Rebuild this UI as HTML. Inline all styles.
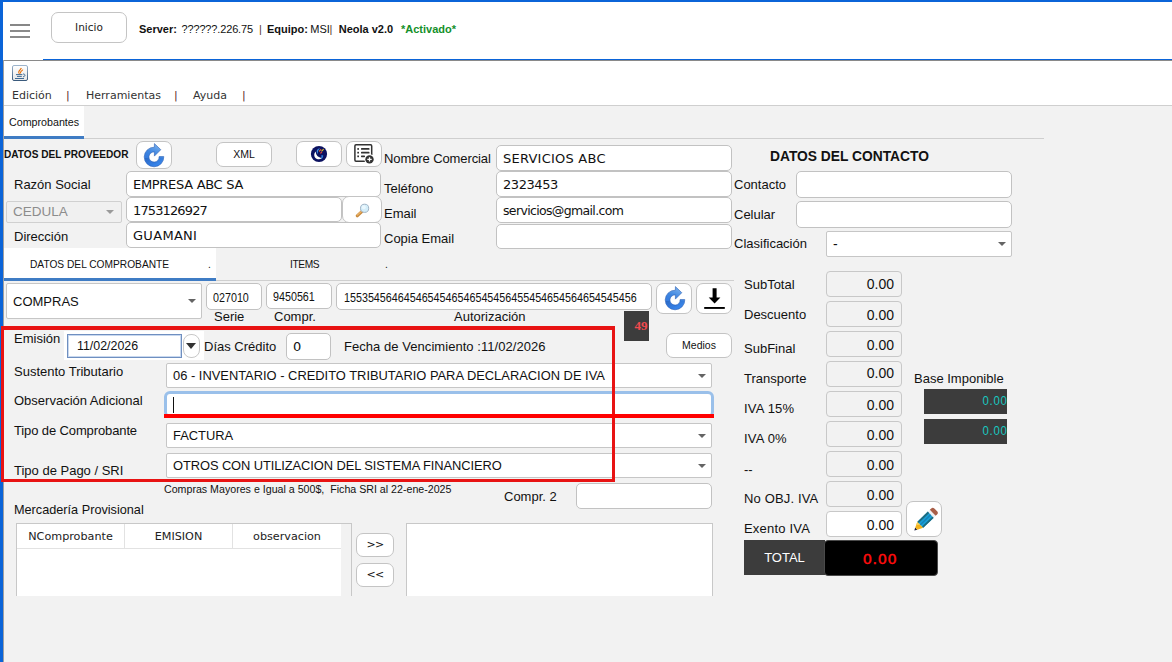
<!DOCTYPE html>
<html lang="es">
<head>
<meta charset="utf-8">
<title>Neola v2.0 - Comprobantes</title>
<style>
html,body{margin:0;padding:0;}
body{width:1172px;height:662px;overflow:hidden;background:#f2f2f2;position:relative;font-family:"Liberation Sans",Arial,sans-serif;font-size:14px;color:#111;}
.a{position:absolute;box-sizing:border-box;white-space:nowrap;}
.lbl{margin-top:1px;position:absolute;white-space:nowrap;font-size:13px;line-height:16px;color:#111;}
.inp{position:absolute;box-sizing:border-box;background:#fff;border:1px solid #c2c2c2;border-radius:5px;white-space:nowrap;overflow:hidden;}
.btn{position:absolute;box-sizing:border-box;background:#fff;border:1px solid #c4c4c4;border-radius:7px;white-space:nowrap;text-align:center;}
.sel{position:absolute;box-sizing:border-box;background:#fff;border:1px solid #c6c6c6;border-radius:2px;white-space:nowrap;overflow:hidden;}
.sel:after{content:"";position:absolute;right:5px;top:50%;margin-top:-2px;border-left:4.2px solid transparent;border-right:4.2px solid transparent;border-top:4.6px solid #646464;}
.sel.dis:after{border-top-color:#9a9a9a;right:7px;}
.cs{font-family:"DejaVu Sans","Liberation Sans",sans-serif;}
.num{position:absolute;box-sizing:border-box;left:826px;width:76px;height:26px;overflow:hidden;border:1px solid #c8c8c8;border-radius:4px;background:#f2f2f2;text-align:right;padding-right:7px;font-size:14px;line-height:25px;}
.mn{font-size:11px;line-height:14px;color:#333;margin-top:1px;}
.it{font-size:13px;line-height:24px;padding-top:1px;padding-left:5px;color:#111;}
.st{font-size:10.2px;line-height:14px;color:#111;}
.sm{font-size:12px;line-height:25px;padding-left:7px;padding-top:1px;color:#111;}
.sm span{display:inline-block;transform:scaleX(.895);transform-origin:0 50%;}
.s13{font-size:12.9px;line-height:23px;padding-left:6px;color:#111;}
.th{font-size:11.2px;line-height:14px;text-align:center;color:#222;}
.bi{width:83px;height:25px;background:#3c3c3c;color:#18c8c0;font-size:13.4px;line-height:24px;text-align:right;padding-right:0;}
.bi span{display:inline-block;letter-spacing:.9px;margin-right:-.9px;transform:scaleX(.85);transform-origin:100% 50%;}
.hd{top:22px;font-size:11px;line-height:14px;color:#111;}
</style>
</head>
<body>
<svg width="0" height="0" style="position:absolute">
<defs>
<linearGradient id="rg" x1="0.7" y1="0" x2="0.3" y2="1">
<stop offset="0" stop-color="#7db4f0"/><stop offset="0.45" stop-color="#3f86e0"/><stop offset="1" stop-color="#2a72e0"/>
</linearGradient>
<linearGradient id="rg2" x1="0" y1="0" x2="1" y2="1">
<stop offset="0" stop-color="#2a62b8"/><stop offset="1" stop-color="#3f95ff"/>
</linearGradient>
<symbol id="refresh" viewBox="-14 -14 28 28" overflow="visible">
<path d="M9.8 -0.4 A9.8 9.8 0 1 1 0.4 -9.8 L0.4 -13.4 L6.8 -7.3 L0.4 -0.9 L0.4 -5.1 A5.1 5.1 0 1 0 5.1 -0.4 Z" fill="url(#rg)" stroke="#2b5fb4" stroke-width="0.6" stroke-linejoin="round"/>
<path d="M-9.3 1 A9.4 9.4 0 0 0 9.3 1 L5.4 1 A5.4 5.4 0 0 1 -5.4 1 Z" fill="url(#rg2)" opacity="0.75"/>
</symbol>
</defs>
</svg>
<!-- window chrome -->
<div class="a" style="left:0;top:0;width:1172px;height:60px;background:#fff;"></div>
<div class="a" style="left:0;top:60px;width:1172px;height:45px;background:#fff;"></div>
<div class="a" style="left:0;top:0;width:1172px;height:2px;background:#0b64d8;"></div>
<div class="a" style="left:3px;top:60px;width:1169px;height:1px;background:#8a8a8a;"></div><div class="a" style="left:43px;top:59px;width:1129px;height:1px;background:#0b64d8;"></div>
<div class="a" style="left:0;top:105px;width:1172px;height:1px;background:#cfcfcf;"></div>

<!-- hamburger -->
<div class="a" style="left:10px;top:24px;width:20px;height:2px;background:#878787;"></div>
<div class="a" style="left:10px;top:30px;width:20px;height:2px;background:#8a8a8a;"></div>
<div class="a" style="left:10px;top:36px;width:20px;height:2px;background:#8a8a8a;"></div>

<div class="btn cs" style="left:51px;top:12px;width:76px;height:31px;font-size:10.5px;line-height:29px;color:#222;">Inicio</div>
<div class="a hd" style="left:139px;"><b>Server:</b></div>
<div class="a hd" style="left:181.5px;letter-spacing:-.15px;">??????.226.75</div>
<div class="a hd" style="left:259px;color:#5a3a2a;">|</div>
<div class="a hd" style="left:267px;"><b>Equipo:</b></div>
<div class="a hd" style="left:310.3px;">MSI</div>
<div class="a hd" style="left:329.5px;color:#5a3a2a;">|</div>
<div class="a hd" style="left:338.7px;"><b>Neola v2.0</b></div>
<div class="a hd" style="left:401px;"><b style="color:#14902a;">*Activado*</b></div>


<!-- java icon -->
<svg class="a" style="left:12px;top:65px;" width="16" height="16" viewBox="0 0 16 16">
<defs><linearGradient id="jb" x1="0" y1="0" x2="0" y2="1"><stop offset="0" stop-color="#9db4cc"/><stop offset="1" stop-color="#3a5a7c"/></linearGradient>
<linearGradient id="jf" x1="0" y1="0" x2="0" y2="1"><stop offset="0" stop-color="#ffffff"/><stop offset="1" stop-color="#e6e6e6"/></linearGradient></defs>
<rect x="0.5" y="0.5" width="15" height="15" rx="1.5" fill="url(#jf)" stroke="url(#jb)" stroke-width="1"/>
<path d="M7.6 8.8 C5.2 7 8.2 5 9.4 3" stroke="#e8720c" stroke-width="1.1" fill="none"/>
<path d="M8.6 8.4 C7.6 6.6 10.2 6 10.8 4.6" stroke="#e8720c" stroke-width="1.1" fill="none"/>
<path d="M4 9.6 H10.4 M5 11.4 H9.8 M3 13.5 H12" stroke="#3f6a94" stroke-width="1" fill="none"/>
<path d="M11 9 C13.6 8.8 13.6 11.6 11 11.8" stroke="#3f6a94" stroke-width="1" fill="none"/>
</svg>
<!-- menu -->
<div class="a cs mn" style="left:12px;top:88px;">Edición</div>
<div class="a cs mn" style="left:66px;top:88px;color:#5a2a2a;">|</div>
<div class="a cs mn" style="left:86px;top:88px;">Herramientas</div>
<div class="a cs mn" style="left:174px;top:88px;color:#5a2a2a;">|</div>
<div class="a cs mn" style="left:193px;top:88px;">Ayuda</div>
<div class="a cs mn" style="left:242px;top:88px;color:#5a2a2a;">|</div>

<!-- main tab -->
<div class="a" style="left:3px;top:106px;width:81px;height:30px;background:#fff;"></div>
<div class="a" style="left:3px;top:138px;width:1041px;height:1px;background:#cfcfcf;"></div>
<div class="a" style="left:3px;top:136px;width:81px;height:3px;background:#3f7cc4;"></div>
<div class="a" id="tabc" style="left:9px;top:115px;font-size:10.7px;line-height:14px;color:#111;">Comprobantes</div>

<!-- proveedor -->
<div class="a" id="dp" style="left:4px;top:149px;font-size:10.1px;line-height:12px;font-weight:bold;color:#111;">DATOS DEL PROVEEDOR</div>
<div class="btn" style="left:136px;top:141px;width:36px;height:28px;"><svg class="a" style="left:3.2px;top:0.7px;" width="28" height="28"><use href="#refresh" x="0" y="0" width="28" height="28"/></svg></div>
<div class="btn" style="left:216px;top:142px;width:56px;height:25px;font-size:10.5px;line-height:23px;">XML</div>
<div class="btn" style="left:296px;top:141px;width:46px;height:26px;"><svg class="a" style="left:12px;top:2px;" width="20" height="20" viewBox="-10 -10 20 20">
<circle r="8.1" fill="#0c1260"/>
<path d="M-3.2 -2.6 C-5.8 -0.5 -5.2 4.2 -1.2 5.2 C1 5.6 2.6 4.8 3.4 3.6 C0.6 4.2 -3.2 1.8 -3.2 -2.6 Z" fill="#fff"/>
<path d="M-2.2 -3.6 C-1.4 -5 0 -5.6 1 -5.4 C-0.6 -4.2 -1.4 -2.4 -1.2 0 C-2 -1 -2.6 -2.4 -2.2 -3.6 Z" fill="#3d8fe8"/>
<path d="M2.2 1.2 L4.2 1.2 C4.2 3.2 3.4 4.6 2 5.2 C2.6 4 2.6 2.6 2.2 1.2 Z" fill="#2b7de0"/>
<path d="M0.4 -2.8 L1.8 -4.4" stroke="#f0642a" stroke-width="1.1" stroke-linecap="round"/>
<path d="M2.8 -3 L4.4 -4.6" stroke="#d8c030" stroke-width="1.1" stroke-linecap="round"/>
<path d="M1.8 -1 L2.6 -1.8" stroke="#e8403a" stroke-width="1.2" stroke-linecap="round"/>
</svg></div>
<div class="btn" style="left:346px;top:141px;width:36px;height:26px;"><svg class="a" style="left:5px;top:1px;" width="26" height="24" viewBox="352 143 26 24">
<path d="M366 161.2 H356 Q354.9 161.2 354.9 160.1 V145.9 Q354.9 144.8 356 144.8 H370.6 Q371.7 144.8 371.7 145.9 V155" fill="none" stroke="#333" stroke-width="1.5"/>
<g fill="#333"><rect x="357.3" y="148.1" width="1.7" height="1.7"/><rect x="357.3" y="151.8" width="1.7" height="1.7"/><rect x="357.3" y="155.5" width="1.7" height="1.7"/>
<rect x="361" y="148.1" width="8.5" height="1.7" rx=".6"/><rect x="361" y="151.8" width="8.5" height="1.7" rx=".6"/><rect x="361" y="155.5" width="4" height="1.7" rx=".6"/></g>
<circle cx="369.5" cy="159.4" r="5.1" fill="#fff"/><circle cx="369.5" cy="159.4" r="4.2" fill="#333"/>
<path d="M367.3 159.4 H371.7 M369.5 157.2 V161.6" stroke="#fff" stroke-width="1.3"/>
</svg></div>

<div class="lbl" style="left:14px;top:176px;">Razón Social</div>
<div class="inp cs it" style="left:126px;top:171px;width:255px;padding-left:6px;height:26px;letter-spacing:-0.3px;">EMPRESA ABC SA</div>
<div class="sel dis" style="left:6px;top:201px;width:116px;height:22px;background:#f0f0f0;border-color:#d0d0d0;color:#8c8c8c;font-size:13.5px;line-height:20px;padding-left:6px;">CEDULA</div>
<div class="inp cs it" style="left:126px;top:197px;width:216px;padding-left:6px;height:25px;letter-spacing:-0.88px;">1753126927</div>
<div class="btn" style="left:342px;top:196px;width:40px;height:27px;"><svg class="a" style="left:10px;top:5px;" width="20" height="18" viewBox="352 201 20 18">
<path d="M360.8 210.6 L356.2 214.8" stroke="#c98a3c" stroke-width="3" stroke-linecap="round"/>
<path d="M360.6 210.2 L356.4 214" stroke="#eab368" stroke-width="1.2" stroke-linecap="round"/>
<circle cx="363.6" cy="207.3" r="4.1" fill="#d3edf9" stroke="#9fb2c4" stroke-width="1"/>
<circle cx="362.8" cy="206.3" r="2" fill="#eaf7fd"/>
</svg></div>
<div class="lbl" style="left:14px;top:228px;">Dirección</div>
<div class="inp cs it" style="left:126px;top:222px;width:255px;padding-left:6px;height:26px;letter-spacing:0.3px;">GUAMANI</div>

<div class="lbl" style="left:384px;top:150px;letter-spacing:-.1px;">Nombre Comercial</div>
<div class="inp cs it" style="left:496px;top:145px;width:236px;height:26px;letter-spacing:0.23px;padding-left:6px;">SERVICIOS ABC</div>
<div class="lbl" style="left:384px;top:180px;">Teléfono</div>
<div class="inp cs it" style="left:496px;top:171px;width:236px;height:26px;letter-spacing:-.44px;padding-left:6px;">2323453</div>
<div class="lbl" style="left:384px;top:205px;">Email</div>
<div class="inp cs it" style="left:496px;top:197px;width:236px;height:26px;letter-spacing:-0.65px;padding-left:6px;font-size:12.5px;">servicios@gmail.com</div>
<div class="lbl" style="left:384px;top:230px;">Copia Email</div>
<div class="inp cs it" style="left:496px;top:224px;width:236px;height:25px;"></div>

<div class="a" id="dc" style="left:770px;top:149px;font-size:13.8px;line-height:16px;font-weight:bold;color:#111;">DATOS DEL CONTACTO</div>
<div class="lbl" style="left:734px;top:176px;">Contacto</div>
<div class="inp" style="left:796px;top:171px;width:216px;height:27px;"></div>
<div class="lbl" style="left:734px;top:206px;">Celular</div>
<div class="inp" style="left:796px;top:201px;width:216px;height:27px;"></div>
<div class="lbl" style="left:734px;top:235px;">Clasificación</div>
<div class="sel" style="left:826px;top:231px;width:186px;height:26px;font-size:14px;line-height:24px;padding-left:6px;">-</div>

<!-- sub tabs -->
<div class="a" style="left:3px;top:248px;width:213px;height:30px;background:#fff;"></div>
<div class="a" style="left:3px;top:280px;width:731px;height:1px;background:#cfcfcf;"></div>
<div class="a" style="left:3px;top:278px;width:213px;height:3px;background:#3f7cc4;"></div>
<div class="a st" style="left:30px;top:258px;">DATOS DEL COMPROBANTE</div>
<div class="a st" style="left:208px;top:258px;">.</div>
<div class="a st" style="left:290px;top:258px;letter-spacing:-.4px;">ITEMS</div>
<div class="a st" style="left:385px;top:258px;">.</div>

<!-- comprobante row -->
<div class="sel" style="left:6px;top:283px;width:196px;height:36px;font-size:13px;line-height:35px;padding-left:6px;">COMPRAS</div>
<div class="inp sm" style="left:206px;top:283px;width:56px;height:27px;line-height:27px;padding-left:6px;"><span>027010</span></div>
<div class="inp sm" style="left:266px;top:283px;width:66px;height:26px;padding-left:6px;"><span>9450561</span></div>
<div class="inp sm" id="aut" style="left:336px;top:283px;width:316px;height:27px;line-height:26px;padding-left:6.5px;"><span>1553545646454654546546545456455454654564654545456</span></div>
<div class="lbl" style="left:214px;top:308px;">Serie</div>
<div class="lbl" style="left:274px;top:308px;">Compr.</div>
<div class="lbl" style="left:454px;top:308px;">Autorización</div>
<div class="btn" style="left:656px;top:283px;width:36px;height:31px;"><svg class="a" style="left:3.7px;top:1.6px;" width="28" height="28"><use href="#refresh" x="0" y="0" width="28" height="28"/></svg></div>
<div class="btn" style="left:696px;top:283px;width:36px;height:31px;"><svg class="a" style="left:4px;top:2px;" width="28" height="26" viewBox="701 286 28 26">
<path d="M712.6 288.3 H716.6 V297.4 H720.4 L714.6 303.6 L708.7 297.4 H712.6 Z" fill="#000"/>
<rect x="704.2" y="307" width="20.6" height="1.9" fill="#000"/>
</svg></div>
<div class="a" style="left:624px;top:311px;width:25px;height:30px;background:#3c3c3c;"></div>
<div class="a" style="left:634.5px;top:319px;font-family:'Liberation Serif',serif;font-weight:bold;font-size:13px;line-height:14px;color:#f04a4e;">49</div>

<!-- emision row -->
<div class="lbl" style="left:14px;top:330px;">Emisión</div>
<div class="a" style="left:64px;top:331px;width:140px;height:29px;background:#fff;"></div>
<div class="a" style="left:67px;top:334px;width:115px;height:24px;background:#fff;border:1px solid #6f8fc0;box-shadow:inset 0 0 0 1px #c8d8ef;font-size:12.4px;line-height:22px;padding-left:9px;">11/02/2026</div>
<div class="a" style="left:183px;top:334px;width:17px;height:24px;background:#fff;border:1px solid #c8c8c8;border-radius:8px;"></div>
<div class="a" style="left:186px;top:343px;width:0;height:0;border-left:5px solid transparent;border-right:5px solid transparent;border-top:6px solid #333;"></div>
<div class="lbl" style="left:204px;top:338px;">Días Crédito</div>
<div class="inp cs" style="left:286px;top:333px;width:45px;height:27px;font-size:13px;line-height:26px;padding-left:6px;">0</div>
<div class="lbl" style="left:344px;top:338px;letter-spacing:.05px;">Fecha de Vencimiento :11/02/2026</div>
<div class="btn" style="left:666px;top:333px;width:66px;height:25px;font-size:10.5px;line-height:22px;">Medios</div>

<div class="lbl" style="left:14px;top:363px;">Sustento Tributario</div>
<div class="sel s13" style="left:166px;top:363px;width:546px;height:25px;">06 - INVENTARIO - CREDITO TRIBUTARIO PARA DECLARACION DE IVA</div>
<div class="lbl" style="left:14px;top:392px;">Observación Adicional</div>
<div class="a" style="left:164px;top:391px;width:550px;height:27px;background:#fff;border:3px solid #9ac0ea;border-radius:6px;"></div>
<div class="a" style="left:173px;top:397px;width:1px;height:16px;background:#111;"></div>
<div class="lbl" style="left:14px;top:422px;letter-spacing:-.12px;" id="tdc">Tipo de Comprobante</div>
<div class="sel s13" style="left:166px;top:423px;width:546px;height:25px;">FACTURA</div>
<div class="lbl" style="left:14px;top:462px;">Tipo de Pago / SRI</div>
<div class="sel s13" style="left:166px;top:453px;width:546px;height:25px;letter-spacing:-0.09px;" id="otros">OTROS CON UTILIZACION DEL SISTEMA FINANCIERO</div>

<div class="a" id="smt" style="left:164px;top:483px;font-size:10.65px;line-height:12px;color:#111;">Compras Mayores e Igual a 500$,&nbsp; Ficha SRI al 22-ene-2025</div>
<div class="lbl" style="left:504px;top:488px;">Compr. 2</div>
<div class="inp" style="left:576px;top:483px;width:136px;height:26px;"></div>
<div class="lbl" id="mp" style="left:14px;top:501px;font-size:12.7px;">Mercadería Provisional</div>

<!-- table -->
<div class="a" style="left:16px;top:523px;width:336px;height:73px;border:1px solid #c8c8c8;border-bottom:none;background:#f2f2f2;"></div>
<div class="a" style="left:17px;top:524px;width:324px;height:72px;background:#fff;"></div>
<div class="a" style="left:17px;top:548px;width:324px;height:1px;background:#e2e2e2;"></div>
<div class="a" style="left:124px;top:524px;width:1px;height:24px;background:#e2e2e2;"></div>
<div class="a" style="left:232px;top:524px;width:1px;height:24px;background:#e2e2e2;"></div>
<div class="a cs th" style="left:17px;top:530px;width:107px;">NComprobante</div>
<div class="a cs th" style="left:125px;top:530px;width:107px;">EMISION</div>
<div class="a cs th" style="left:233px;top:530px;width:108px;">observacion</div>
<div class="btn cs" style="left:356px;top:533px;width:38px;height:24px;font-size:11px;line-height:21px;letter-spacing:-.8px;">&gt;&gt;</div>
<div class="btn cs" style="left:356px;top:563px;width:38px;height:24px;font-size:11px;line-height:21px;letter-spacing:-.8px;">&lt;&lt;</div>
<div class="a" style="left:406px;top:523px;width:307px;height:73px;border:1px solid #c8c8c8;border-bottom:none;background:#fff;"></div>

<!-- red annotation -->
<div class="a" style="left:1px;top:326px;width:614px;height:156px;border:3px solid #e81313;border-top-width:4px;border-left-width:3.4px;z-index:5;"></div>
<div class="a" style="left:164px;top:414px;width:550px;height:4px;background:#ff0000;z-index:5;"></div>

<!-- totals -->
<div class="lbl" style="left:744px;top:276px;">SubTotal</div><div class="num" style="top:271px;line-height:25px;">0.00</div>
<div class="lbl" style="left:744px;top:306px;">Descuento</div><div class="num" style="top:301px;line-height:26px;">0.00</div>
<div class="lbl" style="left:744px;top:340px;">SubFinal</div><div class="num" style="top:331px;line-height:26px;">0.00</div>
<div class="lbl" style="left:744px;top:370px;">Transporte</div><div class="num" style="top:361px;line-height:23px;">0.00</div>
<div class="lbl" style="left:744px;top:400px;letter-spacing:0.2px;">IVA 15%</div><div class="num" style="top:391px;line-height:27px;">0.00</div>
<div class="lbl" style="left:744px;top:430px;letter-spacing:0.2px;">IVA 0%</div><div class="num" style="top:421px;line-height:27px;">0.00</div>
<div class="lbl" style="left:744px;top:461px;">--</div><div class="num" style="top:451px;line-height:27px;">0.00</div>
<div class="lbl" style="left:744px;top:490px;letter-spacing:0.15px;">No OBJ. IVA</div><div class="num" style="top:481px;line-height:27px;">0.00</div>
<div class="lbl" style="left:744px;top:520px;letter-spacing:0.2px;">Exento IVA</div><div class="num" style="top:511px;background:#fff;line-height:27px;">0.00</div>
<div class="lbl" style="left:914px;top:370px;">Base Imponible</div>
<div class="a bi" style="left:924px;top:389px;"><span>0.00</span></div>
<div class="a bi" style="left:924px;top:419px;"><span>0.00</span></div>
<div class="btn" style="left:906px;top:501px;width:36px;height:36px;"><svg class="a" style="left:2px;top:2px;" width="32" height="32" viewBox="908 503 32 32">
<g transform="translate(913.3 529.6) rotate(-44)">
<path d="M0 0 L2.8 -1.5 L2.8 1.5 Z" fill="#1b1b3c"/>
<path d="M2.8 -1.5 L8.4 -4.2 L8.4 4.2 L2.8 1.5 Z" fill="#f2b21c"/>
<path d="M5 -2.6 L8.4 -4.2 L8.4 0 Z" fill="#f7cf5a"/>
<rect x="8.4" y="-4.2" width="14.6" height="8.4" fill="#1a9fd6"/>
<rect x="8.4" y="-4.2" width="14.6" height="1.9" fill="#1d6b7e"/>
<rect x="8.4" y="-0.7" width="14.6" height="1.4" fill="#1683b8"/>
<rect x="8.4" y="2.5" width="14.6" height="1.7" fill="#1d6b7e"/>
<rect x="23" y="-4.2" width="2.6" height="8.4" fill="#eef0f2"/>
<path d="M25.6 -4.2 H27.6 Q29.8 -4.2 29.8 -2 V2 Q29.8 4.2 27.6 4.2 H25.6 Z" fill="#a85f48"/>
</g></svg></div>
<div class="a" style="left:744px;top:540px;width:81px;height:35px;background:#3c3c3c;color:#fff;font-size:13px;line-height:35px;text-align:center;">TOTAL</div>
<div class="a cs" style="left:824px;top:540px;width:114px;height:36px;background:#000;border:1px solid #4a4a4a;border-radius:4px;color:#ff0d0d;-webkit-text-stroke:0.45px #ff0d0d;font-size:14.5px;line-height:36px;text-align:center;letter-spacing:.6px;padding-right:2px;">0.00</div>
<div id="more"></div>
<div class="a" style="left:0;top:0;width:3px;height:662px;background:#0b64d8;"></div><div class="a" style="left:3px;top:60px;width:1px;height:602px;background:#a0a0a0;"></div>
</body>
</html>
